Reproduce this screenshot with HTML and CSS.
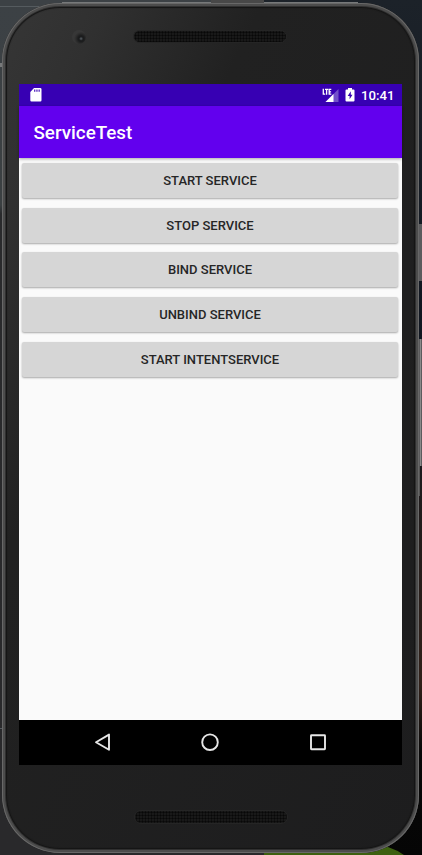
FILE: index.html
```
<!DOCTYPE html>
<html lang="en">
<head>
<meta charset="utf-8">
<title>ServiceTest</title>
<link rel="stylesheet" href="styles.css">
</head>
<body>
<svg class="backdrop" width="422" height="855" aria-hidden="true">
  <defs>
    <linearGradient id="left" x1="0" y1="0" x2="0" y2="1"><stop offset="0" stop-color="#3c4145"/><stop offset=".24" stop-color="#3b4042"/><stop offset=".25" stop-color="#292a2c"/><stop offset="1" stop-color="#29292b"/></linearGradient>
    <linearGradient id="right" x1="0" y1="0" x2="0" y2="1"><stop offset="0" stop-color="#1c2229"/><stop offset=".4" stop-color="#101620"/><stop offset=".65" stop-color="#251d1b"/><stop offset=".8" stop-color="#302019"/><stop offset=".88" stop-color="#080808"/><stop offset="1" stop-color="#050505"/></linearGradient>
  </defs>
  <path fill="url(#left)" d="M0 0h264v855H0z"/>
  <path fill="url(#right)" d="M264 0h158v855H264z"/>
  <path fill="#555b5f" d="M0 6h62v1H0zM0 728h4v1H0z"/>
  <path fill="#77797a" d="M62 2h296v1H62zM0 63h2v4H0z"/>
  <path fill="#484848" d="M211 0h53v3h-53z"/>
  <path fill="#3d6010" d="M264 852Q350 852 388 847Q397 850 404 855H264z"/>
  <path fill="#5b5b5d" d="M419 224h3v57h-3zM419 339h3v127h-3z"/>
  <path fill="#898989" d="M420 339h1v127h-1z"/>
  <path fill="#555" d="M419 466h1v30h-1z"/>
</svg>
<div class="phone">
  <header class="top">
    <i class="camera"></i>
    <i class="speaker"></i>
  </header>
  <main class="screen">
    <div class="status">
      <svg class="sd" width="12" height="14" viewBox="0 0 12 14"><path fill="#fff" fill-rule="evenodd" d="M4 0h6.2Q11.500 0 11.500 1.300v11Q11.500 13.500 10.300 13.500H1.500Q.3 13.500.3 12.300V4zM4.200 1.500v2.300h1.100V1.500zm2.200 0v2.300h1.100V1.500zm2.200 0v2.300h1.100V1.500z"/></svg>
      <svg class="signal" width="17" height="15" viewBox="0 0 17 15"><path fill="#7250ca" d="M16.500 1v13H3.500z"/><path fill="#3700b3" d="M0 0h10v7.300H0z"/><path fill="#fff" d="M11.500 6v8H3.500z"/><path fill="none" stroke="#fff" stroke-width="1.300" d="M1.300.8v5.400h1.900M3 1.400h3.200M4.600 1.400v5.400M9.300 1.400H7.200v4.800h2.100M7.200 3.800h1.900"/></svg>
      <svg class="battery" width="10" height="14" viewBox="0 0 10 14"><path fill="#fff" d="M3 0h4v1.500h1.500q1 0 1 1v10q0 1-1 1h-7q-1 0-1-1v-10q0-1 1-1H3z"/><path fill="#3700b3" d="M5.800 3.200 2.700 8h1.900v3.300L7.500 6.700H5.800z"/></svg>
      <span class="clock">10:41</span>
    </div>
    <div class="appbar">ServiceTest</div>
    <div class="content">
      <button>START SERVICE</button>
      <button>STOP SERVICE</button>
      <button>BIND SERVICE</button>
      <button>UNBIND SERVICE</button>
      <button>START INTENTSERVICE</button>
    </div>
    <nav class="nav">
      <svg width="20" height="20" viewBox="0 0 20 20"><path d="M17 2.600v15.200L4 10.200z"/></svg>
      <svg width="20" height="20" viewBox="0 0 20 20"><circle cx="10" cy="10.200" r="7.800"/></svg>
      <svg width="20" height="20" viewBox="0 0 20 20"><rect x="3" y="3.200" width="14" height="14" rx=".5"/></svg>
    </nav>
  </main>
  <footer class="bottom"><i class="speaker"></i></footer>
</div>
</body>
</html>
```
FILE: styles.css
```
* { box-sizing: border-box; }
body {
  margin: 0;
  width: 422px;
  height: 855px;
  padding: 3px 3px 2px 2px;
  overflow: hidden;
  background: #292a2c;
  font-family: Roboto, sans-serif;
}
.backdrop { position: absolute; left: 0; top: 0; z-index: -1; }
.phone {
  height: 850px;
  width: 417px;
  padding: 0 17px;
  border-radius: 58px;
  background: linear-gradient(115deg, #363636 0%, #303030 13%, #212121 32%, #1d1d1e 100%);
  box-shadow: inset 0 0 0 1px #686868, inset 0 0 0 3px #4c4c4c, inset 0 0 0 4px #303030, inset 0 0 1px 5px #151515;
}
.top {
  height: 81px;
  padding-top: 27px;
  display: flex;
  align-items: flex-start;
}
.camera {
  width: 14px;
  height: 14px;
  margin-left: 53px;
  border-radius: 50%;
  background: radial-gradient(circle at 65% 62%, #4a5055 0 .5px, #1b1c1d 2px 3px, #2b2b2b 5px, #373737 7px);
}
.speaker {
  width: 154px;
  height: 13px;
  margin-left: 47px;
  border: 1px solid #252525;
  border-radius: 7px;
  background: radial-gradient(circle, #080808 0 .7px, #1b1b1b 1.500px) 0 0 / 3px 3px;
}
.screen {
  width: 383px;
  height: 681px;
  display: flex;
  flex-direction: column;
  background: #fafafa;
}
.status {
  height: 22px;
  padding: 0 8px 0 11px;
  display: flex;
  align-items: center;
  background: #3700b3;
  color: #fff;
}
.signal { margin-left: auto; }
.battery { margin-left: 6px; }
.clock {
  width: 33px;
  margin-left: 6px;
  font-size: 13.200px;
  font-weight: 500;
  line-height: 23px;
  white-space: nowrap;
}
.appbar {
  height: 52px;
  padding: 1px 0 0 14.500px;
  background: #6200ee;
  color: #fff;
  font-size: 18.800px;
  font-weight: 500;
  line-height: 52px;
  box-shadow: 0 1px 3px #0005;
}
.content {
  flex: 1;
  padding: 5px 4px 0 3px;
  display: flex;
  flex-direction: column;
  gap: 9.700px;
}
.content button {
  height: 35px;
  flex: none;
  padding: 0;
  border: 0;
  border-radius: 2px;
  background: #d6d6d6;
  box-shadow: 0 1px 2px #0005;
  color: #262626;
  font: 500 13px Roboto, sans-serif;
}
.nav {
  height: 45px;
  padding: 0 74px 1px 73px;
  display: flex;
  align-items: center;
  justify-content: space-between;
  background: #000;
}
.nav svg { fill: none; stroke: #e6e6e6; stroke-width: 1.900; stroke-linejoin: round; }
.bottom { padding: 45px 0 0 68px; }
.bottom .speaker { display: block; height: 14px; }
```
